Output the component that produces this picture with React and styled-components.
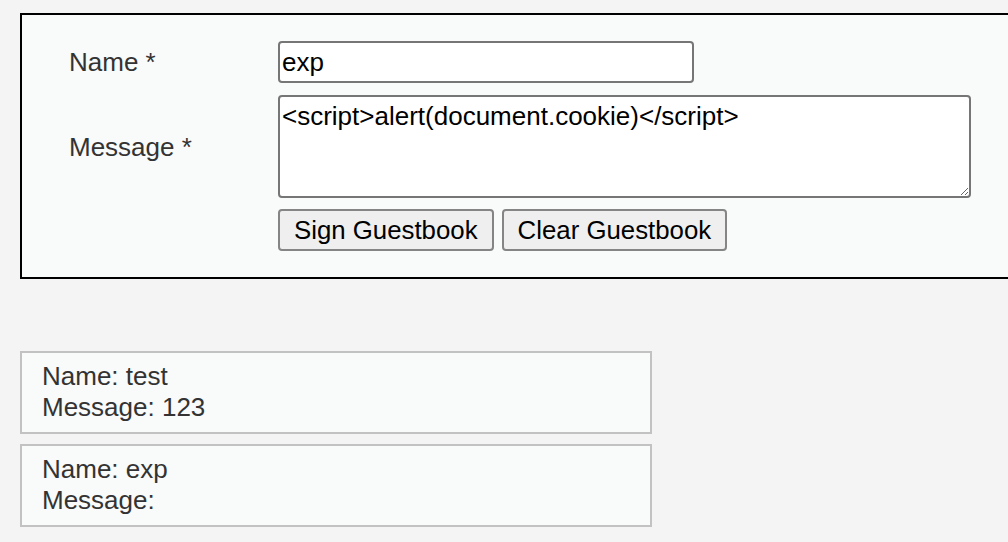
import React from "react";
import styled, { createGlobalStyle } from "styled-components";

const GlobalStyle = createGlobalStyle`
  html, body {
    margin: 0;
    padding: 0;
    overflow: hidden;
    background: #f4f4f4;
  }
  body {
    font-family: "Liberation Sans", Arial, sans-serif;
    font-size: 26px;
    color: #333333;
  }
`;

const Page = styled.div`
  padding: 13px 0 0 20px;
`;

const FormBox = styled.div`
  box-sizing: border-box;
  width: 1010px;
  border: 2px solid #000;
  background: #f9fafa;
  padding: 26px 47px;
`;

const FormGrid = styled.div`
  display: grid;
  grid-template-columns: 209px 1fr;
  row-gap: 12px;
`;

const Label = styled.label`
  align-self: center;
  line-height: 30px;
`;

const TextInput = styled.input`
  box-sizing: border-box;
  width: 416px;
  height: 42px;
  margin: 0;
  padding: 0 2px;
  border: 2px solid #767676;
  border-radius: 4px;
  background: #fff;
  font-family: inherit;
  font-size: 26px;
  color: #000;
  outline: none;
`;

const TextArea = styled.textarea`
  box-sizing: border-box;
  display: block;
  width: 693px;
  height: 103px;
  margin: 0;
  padding: 4px 2px 2px;
  border: 2px solid #767676;
  border-radius: 4px;
  background: #fff;
  font-family: inherit;
  font-size: 26px;
  line-height: 30px;
  color: #000;
  outline: none;
`;

const Buttons = styled.div`
  grid-column: 2;
  display: flex;
  gap: 8px;
  margin-top: -1px;
`;

const Button = styled.button`
  box-sizing: border-box;
  height: 42px;
  margin: 0;
  padding: 0 14px;
  border: 2px solid #858585;
  border-radius: 4px;
  background: #efefef;
  font-family: inherit;
  font-size: 25.8px;
  color: #000;
`;

const Entries = styled.div`
  margin-top: 72px;
  display: flex;
  flex-direction: column;
  gap: 10px;
`;

const Entry = styled.div`
  box-sizing: border-box;
  width: 632px;
  border: 2px solid #c2c2c2;
  background: #f9fafa;
  padding: 8px 20px 9px;
  line-height: 31px;
`;

const entries = [
  { name: "test", message: "123" },
  { name: "exp", message: "" },
];

export default function App() {
  return (
    <Page>
      <GlobalStyle />
      <FormBox>
        <FormGrid>
          <Label>Name *</Label>
          <div>
            <TextInput defaultValue="exp" />
          </div>
          <Label>Message *</Label>
          <TextArea defaultValue="<script>alert(document.cookie)</script>" />
          <Buttons>
            <Button>Sign Guestbook</Button>
            <Button>Clear Guestbook</Button>
          </Buttons>
        </FormGrid>
      </FormBox>
      <Entries>
        {entries.map((e, i) => (
          <Entry key={i}>
            Name: {e.name}
            <br />
            Message: {e.message}
          </Entry>
        ))}
      </Entries>
    </Page>
  );
}
